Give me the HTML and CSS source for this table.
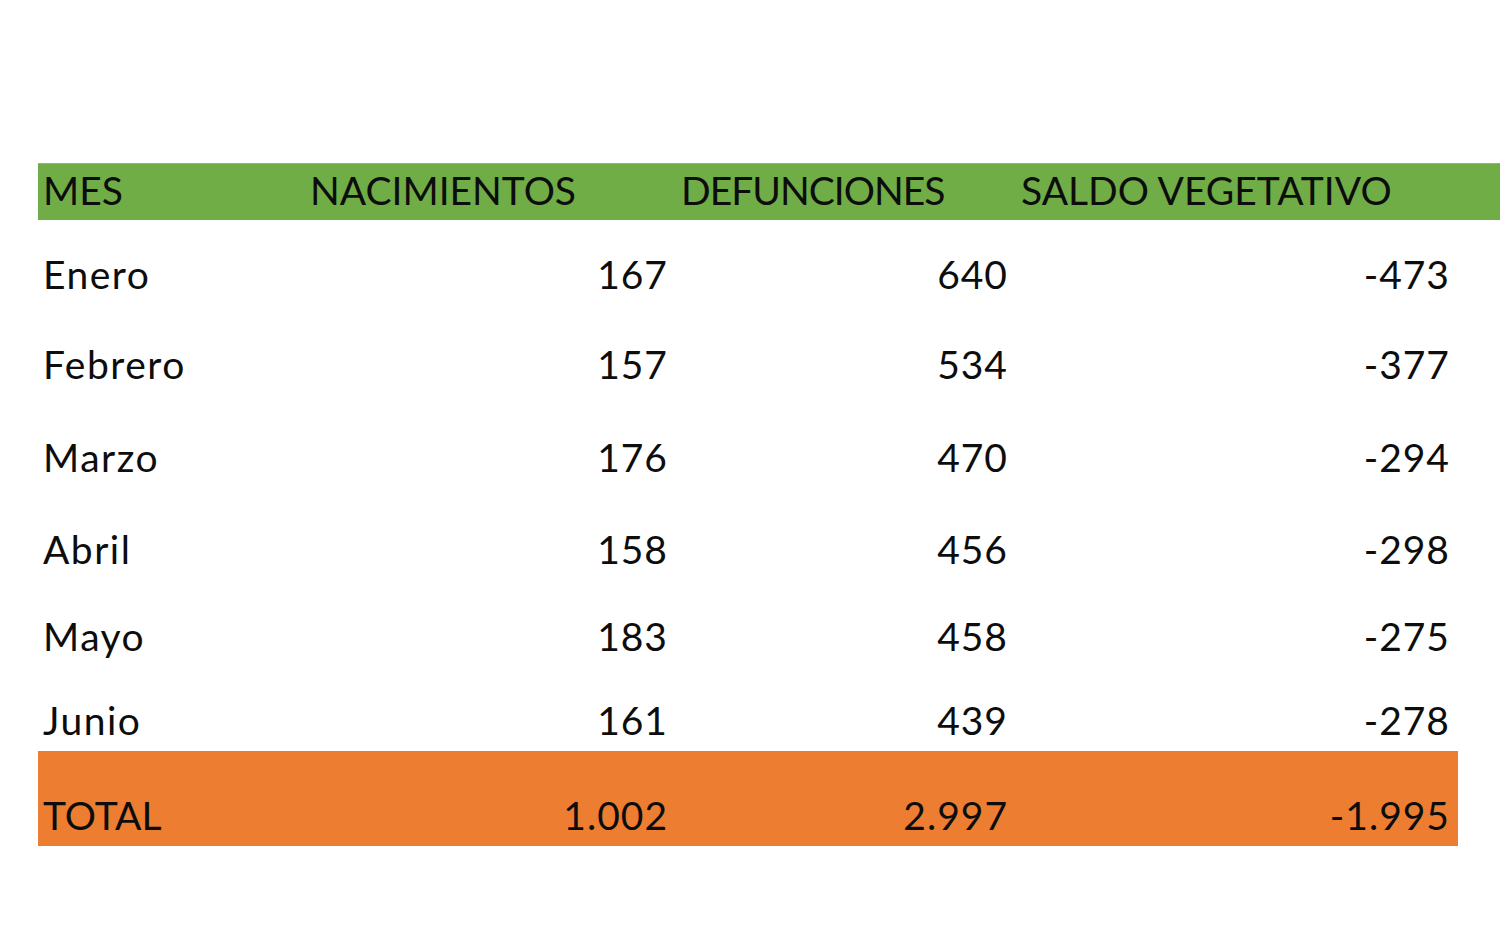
FILE: index.html
```html
<!DOCTYPE html>
<html lang="es">
<head>
<meta charset="utf-8">
<title>Saldo vegetativo</title>
<link rel="stylesheet" href="styles.css">
</head>
<body>
<div class="page">
  <div class="row head">
    <div class="cell">MES</div>
    <div class="cell">NACIMIENTOS</div>
    <div class="cell defun">DEFUNCIONES</div>
    <div class="cell">SALDO VEGETATIVO</div>
  </div>
  <div class="body">
    <div class="row data">
      <div class="cell label">Enero</div><div class="cell num">167</div><div class="cell num">640</div><div class="cell num">-473</div>
    </div>
    <div class="row data">
      <div class="cell label">Febrero</div><div class="cell num">157</div><div class="cell num">534</div><div class="cell num">-377</div>
    </div>
    <div class="row data">
      <div class="cell label">Marzo</div><div class="cell num">176</div><div class="cell num">470</div><div class="cell num">-294</div>
    </div>
    <div class="row data">
      <div class="cell label">Abril</div><div class="cell num">158</div><div class="cell num">456</div><div class="cell num">-298</div>
    </div>
    <div class="row data">
      <div class="cell label">Mayo</div><div class="cell num">183</div><div class="cell num">458</div><div class="cell num">-275</div>
    </div>
    <div class="row data">
      <div class="cell label">Junio</div><div class="cell num">161</div><div class="cell num">439</div><div class="cell num">-278</div>
    </div>
    <div class="row total">
      <div class="cell">TOTAL</div><div class="cell num">1.002</div><div class="cell num">2.997</div><div class="cell num">-1.995</div>
    </div>
  </div>
</div>
</body>
</html>
```
FILE: styles.css
```css
html, body {
  margin: 0;
  padding: 0;
  background: #ffffff;
}
body {
  width: 1500px;
  height: 951px;
  overflow: hidden;
  font-family: "Lato", "Liberation Sans", sans-serif;
  font-size: 39px;
  color: #0d0d0d;
}
.page {
  padding: 163px 0 0 38px;
}
.row {
  display: grid;
  grid-template-columns: 267px 371px 340px 442px;
}
.cell {
  padding: 0 5px;
  white-space: nowrap;
}
.num {
  text-align: right;
  padding-right: 8px;
  letter-spacing: 1px;
}
.label {
  letter-spacing: 1.5px;
}
.defun {
  letter-spacing: -1px;
}
.head {
  background: #70ad47;
  height: 57px;
  align-items: center;
  grid-template-columns: 267px 371px 340px 1fr;
  border-top: 1px solid #8bbd68;
  box-sizing: border-box;
  padding-bottom: 5px;
}
.body {
  width: 1420px;
  padding-top: 9px;
}
.data {
  align-items: center;
}
.data:nth-child(1) { height: 89px; }
.data:nth-child(2) { height: 92px; }
.data:nth-child(3) { height: 94px; }
.data:nth-child(4) { height: 89px; }
.data:nth-child(5) { height: 85px; }
.data:nth-child(6) { height: 73px; padding-top: 10px; box-sizing: border-box; }
.total {
  background: #ed7d31;
  height: 95px;
  align-items: end;
  padding-bottom: 8px;
  box-sizing: border-box;
}
```
